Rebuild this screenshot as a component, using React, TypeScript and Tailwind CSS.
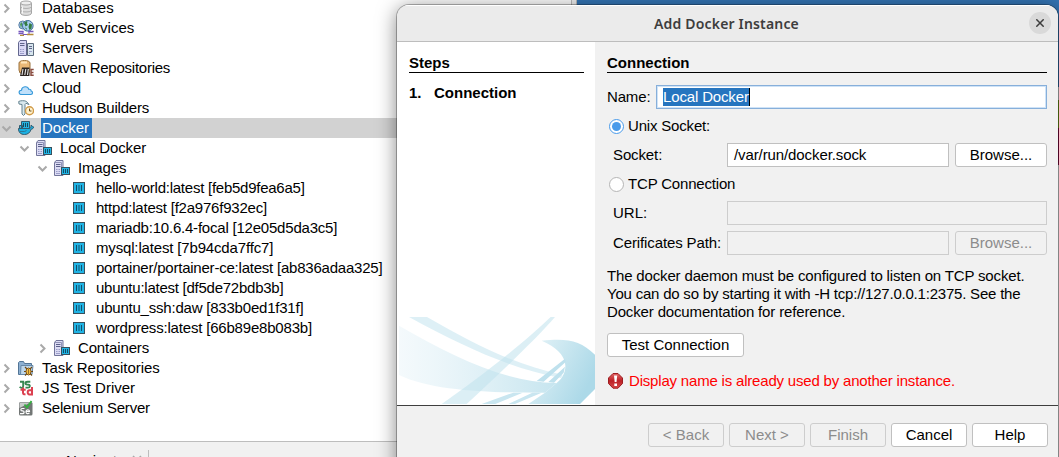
import type { ReactNode } from "react";

function Server() {
  return (
    <>
      <path d="M.5 2.500 2 .5h7v15H.5z" fill="#dcdcf4" stroke="#72759a" />
      <path d="M1 2.500h6.500v12.500" fill="none" stroke="#9193b8" />
      <path d="M2 4.500h4.500M2 6.500h4.500" stroke="#5c608a" />
      <path d="M2 9.500h1.500M4.500 9.500H6M2 11.500h1.500M4.500 11.500H6M2 13.500h4" stroke="#9a9cc8" />
    </>
  );
}

const icons: Record<string, ReactNode> = {
  database: (
    <>
      <path d="M2.500 3v10c0 3.200 11 3.200 11 0V3" fill="#dedede" stroke="#a5a5a5" />
      <ellipse cx="8" cy="3" rx="5.500" ry="2" fill="#eee" stroke="#a5a5a5" />
      <path d="M2.500 6.500c0 2.600 11 2.600 11 0M2.500 10c0 2.600 11 2.600 11 0" fill="none" stroke="#b0b0b0" />
      <path d="M4.500 6.500v7" stroke="#f7f7f7" />
    </>
  ),
  web: (
    <>
      <circle cx="4.800" cy="5" r="4" fill="#a9c8e4" stroke="#577fa6" />
      <path d="M2 4l2-2v3l-1 3z" fill="#4a9a55" />
      <circle cx="9.800" cy="5.800" r="5.300" fill="#a5cdf0" stroke="#3a6794" />
      <path d="M6 3c1-1.500 2.500-2 3.500-1.700L9 3.500 10 5 7.500 6.500zM11.500 3l2.500 1.500-.5 4-2 1.500-1-3zM6.500 7.500l2 .5.500 2z" fill="#347c42" />
      <path d="M.5 11.500h5M.5 13.500h4.500M10.500 11.500h5" fill="none" stroke="#7657bd" strokeWidth="1.300" />
      <path d="M5 11v3.500h6V11" fill="none" stroke="#7657bd" />
      <path d="M2 15.300h4M9 14.500h6.500" stroke="#b38b38" strokeWidth="1.300" />
    </>
  ),
  servers: (
    <>
      <path d="M.5 2.500 2 .5h6.500v15h-8z" fill="#d9d9f6" stroke="#63678e" />
      <path d="M9.500 3.500h6v12h-6z" fill="#d8e6ee" stroke="#5d6c7e" />
      <path d="M2 3.500h4.500M2 5.500h4.500M11 6.500h3M11 8.500h3" stroke="#5f658b" />
      <path d="M2 9.500h1.500M4.500 9.500H6M2 11.500h1.500M4.500 11.500H6M2 13.500h4M11 11.500h3M11 13.500h1" stroke="#9a9cc8" />
    </>
  ),
  maven: (
    <>
      <path d="M1 10V3c0-3.300 11-3.300 11 0v6l-1 4H2z" fill="#eab877" stroke="#99703c" />
      <path d="M3 2.500h6" stroke="#ffe6bd" strokeWidth="2" />
      <path d="M2 16 4 7.500h7.500V16z" fill="#2c241f" />
      <path d="m4 15 1-6M6.800 15l1-6M9.500 15l.8-6" stroke="#e6e6e6" strokeWidth="1.100" />
      <path d="M15.700 9.500H13v5.700h2.700M13 12.500h2.500" fill="none" stroke="#8a4c40" strokeWidth="1.500" />
    </>
  ),
  cloud: (
    <path
      d="M4 14.500c-3.800 0-3.800-4-.5-4.300.3-4.200 6.300-4.600 7.300-.9 1.500-.3 2.400.5 2.300 1.700 2 .3 2 3.500-.3 3.500z"
      fill="#c0e0fa"
      stroke="#3498d9"
      strokeWidth="1.100"
    />
  ),
  hudson: (
    <>
      <path d="M.7 1.500C2 .5 7 .3 8.500 1.500l2.500 3-3-1.200-1 1.200v9.500L5.500 15.500 4 14V4.500L1 4z" fill="#d8e8ee" stroke="#64828f" />
      <circle cx="11.500" cy="10.800" r="4" fill="#fff2cd" stroke="#d09a48" strokeWidth="1.400" />
      <path d="M11.500 8.500V11h2" stroke="#6d5022" fill="none" />
    </>
  ),
  docker: (
    <>
      <path d="M.5 8.500h11.300c.9-.3 1.200-1.600 1.200-3.300 1 .3 1.300.8 1.500 1.500l1.300.3c-.3 1.300-1.300 2-2.600 2.200-1.200 3.600-3.400 5.300-6.700 5.300-3.700 0-6-2-6-6z" fill="#1bb0e3" stroke="#315b6f" />
      <path d="M1.500 5.500h3v3h-3zM3.500 1.500h8v7h-8z" fill="#25b4e2" stroke="#315b6f" />
      <path d="M5.500 3v4M7.500 3v4M9.500 3v4" stroke="#154b61" />
      <path d="M2 11.500h4.500l2-1" fill="none" stroke="#2a7897" />
    </>
  ),
  group: (
    <>
      <Server />
      <rect x="7.500" y="7.500" width="8" height="7" fill="#20b4e5" stroke="#38505c" />
      <path d="M9.500 9v4M11.500 9v4M13.500 9v4" stroke="#12506b" />
    </>
  ),
  image: (
    <>
      <rect x="1.500" y="2.500" width="11" height="11" fill="#20b4e5" stroke="#38505c" />
      <path d="M4.500 5v6M7 5v6M9.500 5v6" stroke="#12506b" />
    </>
  ),
  tasks: (
    <>
      <path d="M.5 14.500V2.500l1-1h4l1 2h7v11z" fill="#8db0d2" stroke="#527596" />
      <path d="m2.500 14.500.5-9h12l-1 9z" fill="#bed6ea" stroke="#6688a8" />
      <path d="m7 7 2 2M14 7l-2 2M6 11.500h9M7 15.500l2-2M14 15.500l-2-2" stroke="#6c4712" strokeWidth="1.100" />
      <ellipse cx="10.500" cy="11.500" rx="2.500" ry="3.500" fill="#f4bd40" stroke="#79501c" />
      <path d="M10.500 9v5" stroke="#815a21" strokeWidth=".8" />
    </>
  ),
  js: (
    <>
      <path d="M2 1.700h3.200V6c0 2.300-2.400 2.300-3.500.8M12.300 1.700H9.500c-2.700 0-2.700 2.700-.3 2.900h1c2.300.3 2 3-.2 3H7.500" fill="none" stroke="#368751" strokeWidth="1.900" />
      <path d="M5 7.500v5.300c0 1.500 1 1.700 2.500 1.500M2.500 9.700h5.200M14 7v8.500M14 10.200h-2.500c-2.400 0-2.400 4.200 0 4.200H14" fill="none" stroke="#dc4050" strokeWidth="2" />
    </>
  ),
  selenium: (
    <>
      <rect x="1" y="2" width="13.500" height="13.500" rx="1.500" fill="#727675" />
      <path d="M1.500 4c0-1.500 1-1.500 1-1.500h10L1.500 8z" fill="#c9cccb" />
      <path d="M6.500 8.500H4c-1.500 0-1.500 2.300 0 2.300h.8c1.900.2 1.700 2.900-.3 2.900H2M8 11.500h3.500c0-2.300-3.500-2.300-3.500.2 0 2.300 2.300 2.300 3.500 1.400" fill="none" stroke="#fff" strokeWidth="1.200" />
      <path d="m6.500 4.500 2.500 3 4.500-6.500" fill="none" stroke="#35b040" strokeWidth="1.800" />
    </>
  ),
};

type Node = {
  label: string;
  icon: string;
  level?: number;
  state?: "open" | "leaf";
  selected?: boolean;
  tracking?: string;
};

const nodes: Node[] = [
  { label: "Databases", icon: "database" },
  { label: "Web Services", icon: "web" },
  { label: "Servers", icon: "servers", tracking: "tracking-[-0.1px]" },
  { label: "Maven Repositories", icon: "maven", tracking: "tracking-[-0.25px]" },
  { label: "Cloud", icon: "cloud" },
  { label: "Hudson Builders", icon: "hudson", tracking: "tracking-[-0.2px]" },
  { label: "Docker", icon: "docker", state: "open", selected: true, tracking: "tracking-[-0.1px]" },
  { label: "Local Docker", icon: "group", level: 1, state: "open", tracking: "tracking-[-0.12px]" },
  { label: "Images", icon: "group", level: 2, state: "open", tracking: "tracking-[-0.15px]" },
  { label: "hello-world:latest [feb5d9fea6a5]", icon: "image", level: 3, state: "leaf", tracking: "tracking-[-0.25px]" },
  { label: "httpd:latest [f2a976f932ec]", icon: "image", level: 3, state: "leaf", tracking: "tracking-[-0.22px]" },
  { label: "mariadb:10.6.4-focal [12e05d5da3c5]", icon: "image", level: 3, state: "leaf", tracking: "tracking-[-0.21px]" },
  { label: "mysql:latest [7b94cda7ffc7]", icon: "image", level: 3, state: "leaf", tracking: "tracking-[-0.16px]" },
  { label: "portainer/portainer-ce:latest [ab836adaa325]", icon: "image", level: 3, state: "leaf", tracking: "tracking-[-0.22px]" },
  { label: "ubuntu:latest [df5de72bdb3b]", icon: "image", level: 3, state: "leaf", tracking: "tracking-[-0.25px]" },
  { label: "ubuntu_ssh:daw [833b0ed1f31f]", icon: "image", level: 3, state: "leaf", tracking: "tracking-[-0.21px]" },
  { label: "wordpress:latest [66b89e8b083b]", icon: "image", level: 3, state: "leaf", tracking: "tracking-[-0.19px]" },
  { label: "Containers", icon: "group", level: 2, tracking: "tracking-[-0.15px]" },
  { label: "Task Repositories", icon: "tasks", tracking: "tracking-[-0.04px]" },
  { label: "JS Test Driver", icon: "js" },
  { label: "Selenium Server", icon: "selenium", tracking: "tracking-[-0.2px]" },
];

const indents = ["pl-0", "pl-[18px]", "pl-9", "pl-[54px]"];

function TreeRow({ label, icon, level = 0, state, selected, tracking = "" }: Node) {
  return (
    <div className={`flex h-5 shrink-0 items-center ${indents[level]} ${selected ? "bg-[#d2d2d2]" : ""}`}>
      <svg className="mr-1 h-4 w-3.5 shrink-0" viewBox="0 0 14 16" fill="none" stroke="#a9a9a9" strokeWidth="2">
        {state === "open" && <path d="m2.500 6.500 4 4 4-4" />}
        {!state && <path d="m4.500 4.500 4 4-4 4" />}
      </svg>
      <svg className="h-4 w-4 shrink-0" viewBox="0 0 16 16">{icons[icon]}</svg>
      <span className={`ml-[7px] h-5 pr-[3px] pl-px leading-5 whitespace-nowrap ${tracking} ${selected ? "bg-[#2675bf] text-white" : ""}`}>
        {label}
      </span>
    </div>
  );
}

function Button({ children, className, disabled }: { children: ReactNode; className: string; disabled?: boolean }) {
  return (
    <button
      disabled={disabled}
      className={`flex h-6 shrink-0 items-center justify-center rounded-[3px] border leading-[18px] ${
        disabled ? "border-[#cdcdcd] bg-[#f1f1f1] text-[#8c8c8c]" : "border-[#c0c0c0] bg-white text-black"
      } ${className}`}
    >
      {children}
    </button>
  );
}

function Radio({ checked, label }: { checked?: boolean; label: string }) {
  return (
    <label className="flex h-[18px] items-center pl-0.5">
      <span className={`flex size-[15px] items-center justify-center rounded-full border bg-white ${checked ? "border-[#4a9bea]" : "border-[#b5b5b5]"}`}>
        {checked && <span className="size-[9px] rounded-full bg-[#4a9bea]" />}
      </span>
      <span className="ml-1 tracking-[-0.18px]">{label}</span>
    </label>
  );
}

function Swoosh() {
  return (
    <svg className="mb-px ml-0.5 h-[88px] w-[196px]" viewBox="27 48 588 264">
      <defs>
        <linearGradient id="wide" x1="0" x2="1">
          <stop offset="0" stopColor="#edf6fa" stopOpacity=".6" />
          <stop offset="1" stopColor="#c6e5ef" />
        </linearGradient>
        <linearGradient id="hook" x1="0" x2="1" y1="0" y2=".5">
          <stop offset="0" stopColor="#e7f4f8" />
          <stop offset="1" stopColor="#acd9e8" />
        </linearGradient>
      </defs>
      <path d="M27 77C190 170 340 246 500 249L465 278C310 278 130 275 27 225Z" fill="url(#wide)" />
      <path d="M57 51h54C240 125 370 195 518 224l-5 10C360 205 220 140 57 51z" fill="#d6ecf4" opacity=".8" />
      <path d="M482 51h13C440 115 340 210 230 312h-75C270 232 400 130 482 51z" fill="#bfe1ed" opacity=".55" />
      <path d="M455 122c75-8 115-2 160 42v103l-45 45H415l50-34 35-29c38-30 44-90-45-127z" fill="url(#hook)" />
      <path d="m440 243 85-67 2 10-66 59zM475 246l50-46-4 18-29 30z" fill="#bfe1ed" />
      <path d="M275 312 370 278h28l-82 34zM355 312l72-34h28l-80 34z" fill="#c9e6f0" />
    </svg>
  );
}

function Dialog() {
  return (
    <section className="absolute top-[5px] left-[397px] flex h-[470px] w-[661px] flex-col overflow-hidden rounded-t-[12px] bg-[#f1f1f1] shadow-[0_0_0_1px_rgba(0,0,0,0.28),0_3px_20px_rgba(0,0,0,0.5)]">
      <header className="flex h-[37px] shrink-0 items-center border-b border-[#bdbdbd] bg-[#ebebeb] pr-[7px] shadow-[inset_0_1px_0_#fff]">
        <h1 className="flex-1 pt-0.5 pl-[27px] text-center font-['Noto_Sans'] text-[14px] leading-5 font-semibold tracking-[0.17px] text-[#3d3d3d]">
          Add Docker Instance
        </h1>
        <button className="flex size-[22px] items-center justify-center rounded-full bg-[#d9d9d9]">
          <svg className="size-2" viewBox="0 0 8 8" stroke="#3d3d3d" strokeWidth="1.500">
            <path d="m.3.3 7.400 7.400M7.700.3.3 7.700" />
          </svg>
        </button>
      </header>
      <div className="flex h-[364px] shrink-0 border-b border-[#3e3e3e]">
        <aside className="flex w-[198px] flex-col justify-between bg-white">
          <div className="pt-3 pr-[11px] pl-3 font-bold">
            <h2 className="h-[19px] border-b border-black leading-[18px]">Steps</h2>
            <ol className="mt-[11px] flex leading-[18px]">
              <li className="w-[25px]">1.</li>
              <li>Connection</li>
            </ol>
          </div>
          <Swoosh />
        </aside>
        <main className="flex flex-1 flex-col pt-3 pr-[11px] pl-3">
          <h2 className="h-[19px] shrink-0 border-b border-black leading-[18px] font-bold">Connection</h2>
          <div className="mt-3 flex h-6 shrink-0 items-center">
            <span className="w-[49px] tracking-[-0.15px]">Name:</span>
            <div className="flex h-6 flex-1 items-center border border-[#87afda] bg-white pl-1.5 shadow-[inset_0_0_0_1px_#cfe3f7]">
              <span className="h-[18px] border-r border-black bg-[#2675bf] leading-[18px] tracking-[-0.15px] text-white">Local Docker</span>
            </div>
          </div>
          <div className="mt-2 shrink-0"><Radio checked label="Unix Socket:" /></div>
          <div className="mt-2 flex h-6 shrink-0 items-center pl-1.5">
            <span className="w-[114px] tracking-[-0.12px]">Socket:</span>
            <div className="flex h-6 w-[222px] items-center border border-[#c0c0c0] bg-white pl-1.5 tracking-[-0.1px]">/var/run/docker.sock</div>
            <Button className="ml-1.5 w-[92px]">Browse...</Button>
          </div>
          <div className="mt-2 shrink-0"><Radio label="TCP Connection" /></div>
          <div className="mt-2 flex h-6 shrink-0 items-center pl-1.5">
            <span className="w-[114px]">URL:</span>
            <div className="h-6 flex-1 border border-[#cdcdcd]" />
          </div>
          <div className="mt-1.5 flex h-6 shrink-0 items-center pl-1.5">
            <span className="w-[114px] tracking-[-0.12px] whitespace-nowrap">Cerificates Path:</span>
            <div className="h-6 w-[222px] border border-[#cdcdcd]" />
            <Button disabled className="ml-1.5 w-[92px]">Browse...</Button>
          </div>
          <p className="mt-3 leading-[18px] whitespace-nowrap">
            <span className="block tracking-[-0.16px]">The docker daemon must be configured to listen on TCP socket.</span>
            <span className="block tracking-[-0.21px]">You can do so by starting it with -H tcp://127.0.0.1:2375. See the</span>
            <span className="block tracking-[-0.15px]">Docker documentation for reference.</span>
          </p>
          <Button className="mt-3 w-[137px]">Test Connection</Button>
          <div className="mt-[15px] flex h-[18px] items-center tracking-[-0.19px] whitespace-nowrap text-[#ff0000]">
            <svg className="mr-[5px] ml-px size-4" viewBox="0 0 16 16">
              <defs>
                <linearGradient id="alert" x2="0" y2="1">
                  <stop stopColor="#df6666" />
                  <stop offset=".5" stopColor="#bd2026" />
                  <stop offset="1" stopColor="#d64b4b" />
                </linearGradient>
              </defs>
              <path d="M5 .5h5L14.500 5v5.500L10 15.200H5L.5 10.500V5z" fill="url(#alert)" stroke="#9d1d20" />
              <path d="M6 2.500h3.200L8.500 9H6.700zM6.300 10.500H9V13H6.300z" fill="#fff" />
            </svg>
            Display name is already used by another instance.
          </div>
        </main>
      </div>
      <footer className="flex gap-[5px] pt-[17px] pl-[251px]">
        <Button disabled className="w-[76px]">&lt; Back</Button>
        <Button disabled className="w-[76px]">Next &gt;</Button>
        <Button disabled className="w-[76px]">Finish</Button>
        <Button className="w-[76px]">Cancel</Button>
        <Button className="w-[76px]">Help</Button>
      </footer>
    </section>
  );
}

export default function App() {
  return (
    <div className="relative flex h-[457px] w-[1059px] overflow-hidden bg-white font-['Liberation_Sans',sans-serif] text-[15px] leading-[18px] text-black">
      <div className="flex w-[571px] flex-col">
        <div className="-mt-0.5 flex h-[443px] shrink-0 flex-col">
          {nodes.map((node) => (
            <TreeRow key={node.label} {...node} />
          ))}
        </div>
        <div className="flex h-10 shrink-0 border-t border-[#bdbdbd] bg-[#f1f1f1] pt-2 pl-[66px]">
          <span className="w-[66px] pt-0.5">Navigator</span>
          <svg className="mt-[5px] h-2.5 w-2.5" viewBox="0 0 10 10" stroke="#aaa" strokeWidth="1.500">
            <path d="m1 1 8 8M9 1 1 9" />
          </svg>
          <span className="ml-[6px] h-8 w-px bg-[#bdbdbd]" />
        </div>
      </div>
      <div className="w-1.5 border-x border-[#bdbdbd] bg-[#f1f1f1]" />
      <div className="flex flex-1 flex-col">
        <div className="h-[87px] bg-[#3475b5]" />
        <div className="h-[13px] bg-[#e5e5e5]" />
        <div className="h-7 bg-[#79a51a]" />
        <div className="h-[37px] bg-[#8c0b42]" />
        <div className="flex-1 bg-[#f1f1f1]" />
      </div>
      <Dialog />
    </div>
  );
}
